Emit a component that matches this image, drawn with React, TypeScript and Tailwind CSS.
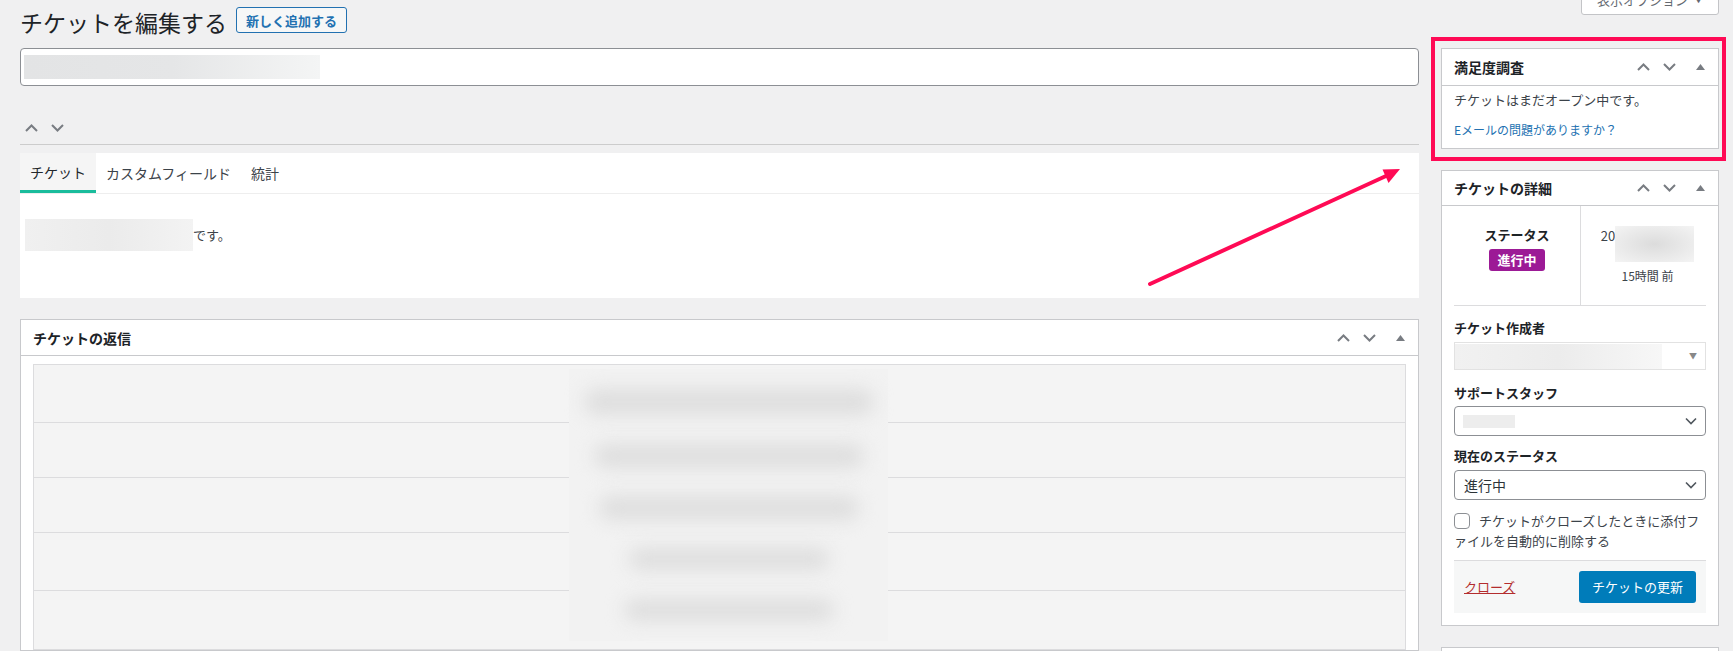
import React from "react";

const ChevronUp = () => (
  <svg width="13" height="8" viewBox="0 0 13 8">
    <path d="M1 7 6.5 1.5 12 7" fill="none" stroke="#787c82" strokeWidth="2" />
  </svg>
);

const ChevronDown = () => (
  <svg width="13" height="8" viewBox="0 0 13 8">
    <path d="M1 1 6.5 6.5 12 1" fill="none" stroke="#787c82" strokeWidth="2" />
  </svg>
);

const Caret = () => (
  <svg width="9" height="6" viewBox="0 0 9 6">
    <path d="M4.5 0 9 6H0z" fill="#787c82" />
  </svg>
);

const PanelControls = () => (
  <div className="flex h-full items-center">
    <span className="flex w-[26px] justify-center">
      <ChevronUp />
    </span>
    <span className="flex w-[26px] justify-center">
      <ChevronDown />
    </span>
    <span className="flex w-[36px] justify-center">
      <Caret />
    </span>
  </div>
);

const PanelHeader = ({ title, h = "h-[36px]" }: { title: string; h?: string }) => (
  <div className={`flex ${h} items-center border-b border-[#c8c9cc] pl-[12px]`}>
    <h2 className="flex-1 text-[14px] font-semibold leading-[20px] text-[#1d2327]">{title}</h2>
    <PanelControls />
  </div>
);

const SelectChevron = () => (
  <svg width="12" height="8" viewBox="0 0 12 8">
    <path d="M1 1.5 6 6.5 11 1.5" fill="none" stroke="#50575e" strokeWidth="1.6" />
  </svg>
);

const streaks = [
  { w: "w-[290px]", h: "h-[26px]" },
  { w: "w-[270px]", h: "h-[24px]" },
  { w: "w-[260px]", h: "h-[24px]" },
  { w: "w-[200px]", h: "h-[22px]" },
  { w: "w-[210px]", h: "h-[22px]" },
];

const replyRows = ["h-[58px]", "h-[55px]", "h-[55px]", "h-[58px]", "h-[58px]"];

const App = () => {
  return (
    <div className="relative flex h-[651px] w-full items-start overflow-hidden bg-[#f0f0f1] pl-[20px] pr-[14px] font-['Noto_Sans_CJK_JP','Noto_Sans',sans-serif] text-[13px] text-[#3c434a]">
      {/* left column */}
      <div className="flex min-w-0 flex-1 flex-col">
        <div className="flex items-start gap-[9px] pt-[7px]">
          <h1 className="text-[23px] font-normal leading-[30px] text-[#1d2327]">チケットを編集する</h1>
          <button className="flex h-[26px] items-center rounded-[3px] border border-[#2271b1] bg-[#f6f7f7] px-[9px] text-[13px] font-semibold leading-none text-[#2271b1]">
            新しく追加する
          </button>
        </div>

        <div className="mt-[11px] flex h-[38px] items-center rounded-[4px] border border-[#8c8f94] bg-white pl-[3px]">
          <div className="h-[24px] w-[296px] bg-linear-to-r from-[#e3e4e5] via-[#e5e6e7] to-[#f4f5f5]" />
        </div>

        <div className="mt-[37px] flex h-[9px] items-center gap-[13px] pl-[5px]">
          <ChevronUp />
          <ChevronDown />
        </div>
        <div className="mt-[12px] h-px bg-[#cccccc]" />

        {/* tabs */}
        <div className="mt-[8px] h-[145px] bg-white">
          <div className="flex h-[41px] border-b border-[#eeeeee]">
            <div className="flex items-center border-b-[3px] border-[#1abc9c] bg-[#f5f5f5] px-[10px] pt-[2px] text-[14px] text-[#23282d]">
              チケット
            </div>
            <div className="flex items-center px-[10px] text-[14px] text-[#3c434a]">カスタムフィールド</div>
            <div className="flex items-center px-[10px] text-[14px] text-[#3c434a]">統計</div>
          </div>
          <div className="mt-[25px] flex items-center pl-[5px]">
            <div className="h-[32px] w-[168px] bg-linear-to-r from-[#f0f0f0] via-[#ebebeb] to-[#f3f3f3]" />
            <span className="leading-[20px]">です。</span>
          </div>
        </div>

        {/* replies */}
        <div className="mt-[21px] border border-[#c8c9cc] bg-white">
          <PanelHeader title="チケットの返信" />
          <div className="relative mx-[12px] mt-[8px] border border-[#dcdcde] bg-[#f4f4f4]">
            {replyRows.map((h, i) => (
              <div key={i} className={`${h} ${i < replyRows.length - 1 ? "border-b border-[#dcdcde]" : ""}`} />
            ))}
            <div className="absolute left-[535px] top-[4px] flex h-[272px] w-[319px] flex-col items-center justify-around bg-[#f2f2f2] py-[6px]">
              {streaks.map((s, i) => (
                <div key={i} className={`${s.w} ${s.h} rounded-full bg-[#dedede] blur-[9px]`} />
              ))}
            </div>
          </div>
        </div>
      </div>

      {/* right column */}
      <div className="ml-[22px] flex w-[278px] shrink-0 flex-col">
        <div className="-mt-[15px] flex h-[30px] w-[138px] shrink-0 items-center justify-center gap-[6px] self-end rounded-b-[3px] border border-[#c3c4c7] bg-white text-[13px] text-[#646970]">
          <span>表示オプション</span>
          <span className="text-[9px]">▼</span>
        </div>

        <div className="-ml-[10px] -mr-[7px] mt-[22px] shrink-0 border-4 border-[#ff0a55] pb-[8px] pl-[6px] pr-[3px] pt-[7px]">
          <div className="border border-[#c8c9cc] bg-white">
            <PanelHeader title="満足度調査" h="h-[37px]" />
            <div className="px-[12px] pb-[8px] pt-[4px] leading-[20px]">
              <p className="text-[13px] text-[#3c434a]">チケットはまだオープン中です。</p>
              <p className="mt-[10px] text-[12px] text-[#2271b1]">Eメールの問題がありますか？</p>
            </div>
          </div>
        </div>

        {/* ticket details */}
        <div className="mt-[9px] shrink-0 border border-[#c8c9cc] bg-white">
          <PanelHeader title="チケットの詳細" h="h-[35px]" />
          <div className="px-[12px] pb-[12px]">
            <div className="grid h-[100px] grid-cols-2 border-b border-[#dcdcde]">
              <div className="flex flex-col items-center pt-[19px]">
                <span className="font-semibold leading-[20px] text-[#1d2327]">ステータス</span>
                <span className="mt-[4px] flex h-[22px] items-center rounded-[3px] bg-[#9c1a96] px-[8px] font-bold text-white">
                  進行中
                </span>
              </div>
              <div className="flex flex-col items-center border-l border-[#dcdcde] pl-[8px] pt-[20px]">
                <div className="flex items-start">
                  <span className="leading-[20px] text-[#3c434a]">20</span>
                  <div className="h-[36px] w-[79px] bg-radial from-[#dcdcdc] to-[#f4f4f4]" />
                </div>
                <span className="mt-[4px] text-[12px] leading-[20px] text-[#3c434a]">15時間 前</span>
              </div>
            </div>

            <div className="mt-[12px] font-semibold leading-[20px] text-[#1d2327]">チケット作成者</div>
            <div className="mt-[4px] flex h-[28px] items-center border border-[#e2e2e2] bg-white">
              <div className="h-[25px] w-[207px] bg-linear-to-r from-[#f1f1f1] via-[#ececec] to-[#f7f7f7]" />
              <span className="ml-auto mr-[8px] text-[8px] text-[#888888]">▼</span>
            </div>

            <div className="mt-[13px] font-semibold leading-[20px] text-[#1d2327]">サポートスタッフ</div>
            <div className="mt-[3px] flex h-[30px] items-center rounded-[4px] border border-[#8c8f94] bg-white pl-[8px] pr-[8px]">
              <div className="h-[13px] w-[52px] bg-[#ededed]" />
              <span className="ml-auto">
                <SelectChevron />
              </span>
            </div>

            <div className="mt-[10px] font-semibold leading-[20px] text-[#1d2327]">現在のステータス</div>
            <div className="mt-[4px] flex h-[30px] items-center rounded-[4px] border border-[#8c8f94] bg-white pl-[9px] pr-[8px]">
              <span className="text-[14px] text-[#2c3338]">進行中</span>
              <span className="ml-auto">
                <SelectChevron />
              </span>
            </div>

            <p className="mt-[11px] leading-[20px] text-[#3c434a]">
              <span className="mr-[9px] inline-block h-[16px] w-[16px] rounded-[4px] border border-[#8c8f94] bg-white align-[-3px]" />
              チケットがクローズしたときに添付ファイルを自動的に削除する
            </p>

            <div className="mt-[9px] flex h-[53px] items-center justify-between border-t border-[#dcdcde] bg-[#f6f7f7] px-[10px]">
              <a className="text-[13px] text-[#b32d2e] underline">クローズ</a>
              <button className="flex h-[32px] w-[117px] items-center justify-center rounded-[3px] bg-[#007cba] text-[13px] text-white">
                チケットの更新
              </button>
            </div>
          </div>
        </div>

        <div className="mt-[21px] h-[40px] shrink-0 border border-[#c8c9cc] bg-white" />
      </div>

      {/* annotation arrow */}
      <svg className="pointer-events-none absolute left-0 top-0" width="1733" height="651">
        <line x1="1150" y1="284" x2="1386" y2="176" stroke="#ff0a55" strokeWidth="4" strokeLinecap="round" />
        <polygon points="1400,169 1382.5,169.5 1388.5,183" fill="#ff0a55" />
      </svg>
    </div>
  );
};

export default App;
